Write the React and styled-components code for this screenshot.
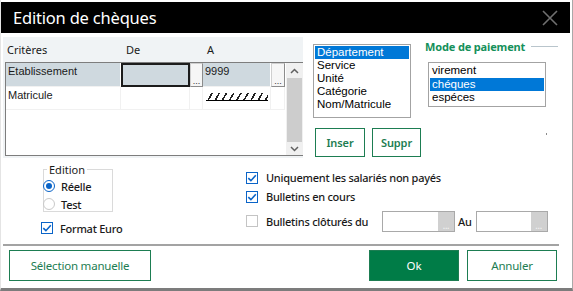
import styled, { createGlobalStyle } from "styled-components"

const GlobalStyle = createGlobalStyle`
  html, body {
    margin: 0;
    padding: 0;
    background: #fff;
  }
  body {
    width: 573px;
    height: 291px;
    overflow: hidden;
  }
`

const UI_FONT = `"Noto Sans", "Open Sans", sans-serif`
const LIST_FONT = `"Liberation Sans", Arial, sans-serif`
const GREEN = "#1d7d52"

const Window = styled.div`
  width: 573px;
  height: 291px;
  box-sizing: border-box;
  padding: 2px 2px 0 0;
  border-left: 1px solid #e4e4e4;
  border-right: 1px solid #a9a9a9;
  border-bottom: 3px solid #7c7c7c;
  display: flex;
  flex-direction: column;
  font-family: ${UI_FONT};
  color: #1a1a1a;
`

const TitleBar = styled.div`
  height: 31px;
  background: #000;
  display: flex;
  align-items: center;
  justify-content: space-between;
  padding: 0 12px 0 12px;
`

const Title = styled.span`
  color: #fff;
  font-size: 16.5px;
  letter-spacing: -0.2px;
`

// --- zone haute : grille des critères
const TopSection = styled.div`
  display: flex;
  height: 121px;
  margin: 4px 0 0 2px;
`

const GridPanel = styled.div`
  width: 300px;
  background: #f0f3f5;
  padding: 0 0 2px 2px;
  box-sizing: border-box;
  display: flex;
  flex-direction: column;
`

const COLS = "115px 69px 13px 68px 14px"

const GridHeader = styled.div`
  height: 25px;
  display: grid;
  grid-template-columns: ${COLS};
  padding-left: 1px;
  align-items: center;
  font-size: 11px;
`

const HeaderCell = styled.span`
  padding-left: ${p => p.$pad}px;
`

const GridBox = styled.div`
  flex: 1;
  display: flex;
  border: 1px solid #7d7d7d;
  border-right: none;
  background: #fff;
`

const Table = styled.div`
  flex: 1;
  display: grid;
  grid-template-columns: ${COLS};
  grid-template-rows: 24px 23px;
  align-content: start;
  font-family: ${LIST_FONT};
  font-size: 11px;
`

const Cell = styled.div`
  box-sizing: border-box;
  background: ${p => (p.$selected ? "#cfd9df" : "#fff")};
  border-right: 1px solid ${p => (p.$selected ? "#fff" : "#f1f1f1")};
  border-bottom: 1px solid #f1f1f1;
  padding: 2px 0 0 2px;
  white-space: nowrap;
  ${p => p.$focus && `
    border: 2px solid #1c1c1c;
    border-right: 2px solid #1c1c1c;
  `}
`

const DotsButton = styled.div`
  box-sizing: border-box;
  background: #f6f6f6;
  border: 1px solid #cfcfcf;
  border-right-color: #8c8c8c;
  border-bottom-color: #8c8c8c;
  font-size: 9px;
  display: flex;
  align-items: flex-end;
  justify-content: center;
  line-height: 10px;
  color: #333;
`

const Hatch = styled.div`
  margin: 4px 2px 0 1px;
  height: 7px;
  border-bottom: 1px solid #000;
  background: repeating-linear-gradient(120deg, #fff 0 4.6px, #222 4.6px 6.2px);
`

const ScrollBar = styled.div`
  width: 17px;
  background: #f0f0f0;
  display: flex;
  flex-direction: column;
  align-items: center;
`

const ScrollArrow = styled.div`
  height: ${p => p.$h}px;
  width: 100%;
  display: flex;
  align-items: center;
  justify-content: center;
`

const ScrollThumb = styled.div`
  flex: 1;
  width: 15px;
  background: #cdcdcd;
`

// --- listes de droite
const CriteriaColumn = styled.div`
  width: 108px;
  margin-left: 10px;
  padding-top: 7px;
  display: flex;
  flex-direction: column;
`

const ListBox = styled.div`
  width: ${p => p.$w}px;
  height: ${p => p.$h}px;
  box-sizing: border-box;
  border: 1px solid #a3a3a3;
  padding: 1px 0 0 1px;
  font-family: ${LIST_FONT};
  font-size: 11.5px;
  line-height: ${p => p.$lh}px;
  background: #fff;
`

const ListItem = styled.div`
  padding-left: 2px;
  margin-right: 1px;
  white-space: nowrap;
  background: ${p => (p.$selected ? "#0078d7" : "transparent")};
  color: ${p => (p.$selected ? "#fff" : "#000")};
`

const ButtonRow = styled.div`
  display: flex;
  gap: 7px;
  margin-top: 10px;
  margin-left: 2px;
`

const GreenButton = styled.button`
  width: ${p => p.$w}px;
  height: ${p => p.$h}px;
  box-sizing: border-box;
  border: 1.5px solid ${GREEN};
  background: ${p => (p.$primary ? "#007c47" : "#fff")};
  color: ${p => (p.$primary ? "#fff" : GREEN)};
  font-family: ${UI_FONT};
  font-size: ${p => p.$size || 11}px;
  font-weight: ${p => p.$weight || 600};
  letter-spacing: ${p => p.$ls ?? -0.1}px;
  padding: 0;
  cursor: pointer;
`

const PaymentColumn = styled.div`
  margin-left: 4px;
  padding-top: 3px;
  display: flex;
  flex-direction: column;
`

const SectionHeader = styled.div`
  display: flex;
  align-items: center;
  height: 13px;
`

const SectionTitle = styled.span`
  color: #15905a;
  font-size: 11px;
  font-weight: 700;
  letter-spacing: -0.15px;
`

const SectionLine = styled.span`
  width: 27px;
  height: 1px;
  background: #b9c5cc;
  margin-left: 6px;
`

const PaymentList = styled.div`
  margin: 9px 0 0 3px;
`

const Tick = styled.span`
  width: 1px;
  height: 2px;
  background: #8a8a8a;
  margin: 26px 0 0 121px;
`

// --- zone du milieu : options
const MiddleSection = styled.div`
  display: flex;
  height: 86px;
  margin-left: 2px;
`

const OptionsLeft = styled.div`
  width: 243px;
  box-sizing: border-box;
  padding: 5px 0 0 40px;
`

const GroupBox = styled.fieldset`
  width: 70px;
  height: 49px;
  box-sizing: border-box;
  margin: 0;
  padding: 1px 0 0 0;
  border: 1px solid #dadada;
`

const Legend = styled.legend`
  font-size: 11px;
  padding: 0 2px;
  margin-left: 3px;
  line-height: 13px;
`

const OptionRow = styled.label`
  display: flex;
  align-items: center;
  height: ${p => p.$h || 18}px;
  margin-left: ${p => p.$ml || 0}px;
  margin-top: ${p => p.$mt || 0}px;
  font-size: 11px;
  font-weight: 500;
  letter-spacing: -0.25px;
  white-space: nowrap;
`

const RadioDot = styled.span`
  width: 12px;
  height: 12px;
  box-sizing: border-box;
  border-radius: 50%;
  border: 1px solid ${p => (p.$on ? "#0a64c8" : "#c9c9c9")};
  display: flex;
  align-items: center;
  justify-content: center;
  margin-right: 6px;
  background: #fff;

  &::after {
    content: '';
    width: 6px;
    height: 6px;
    border-radius: 50%;
    background: ${p => (p.$on ? "#0a64c8" : "transparent")};
  }
`

const CheckBox = styled.span`
  width: 12px;
  height: 12px;
  box-sizing: border-box;
  border: 1px solid ${p => (p.$on ? "#0a64c8" : "#c4c4c4")};
  background: #fff;
  display: flex;
  align-items: center;
  justify-content: center;
  margin-right: ${p => p.$mr || 7}px;
  flex-shrink: 0;
`

const OptionsRight = styled.div`
  padding-top: 10px;
  display: flex;
  flex-direction: column;
`

const OptionLabel = styled.span`
  width: ${p => (p.$w ? `${p.$w}px` : "auto")};
  flex-shrink: 0;
`

const DateInput = styled.div`
  width: ${p => p.$w}px;
  height: 21px;
  box-sizing: border-box;
  border: 1px solid #a9a9a9;
  display: flex;
  justify-content: flex-end;
  background: #fff;
  flex-shrink: 0;
`

const DateButton = styled.span`
  width: 16px;
  background: #d0d0d0;
  color: #f4f4f4;
  font-size: 9px;
  line-height: 10px;
  display: flex;
  align-items: flex-end;
  justify-content: center;
`

const AuLabel = styled.span`
  margin: 0 4px 0 3px;
`

const Separator = styled.div`
  width: 556px;
  height: 2px;
  margin-left: 2px;
  background: #a3a3a3;
`

const Footer = styled.div`
  display: flex;
  gap: 8px;
  width: 548px;
  margin: 4px 0 0 8px;
`

const Spacer = styled.div`
  flex: 1;
`

const Check = ({ on, mr }) => (
  <CheckBox $on={on} $mr={mr}>
    {on && (
      <svg width="10" height="10" viewBox="0 0 10 10">
        <path d="M1.3 5.2 L3.9 7.7 L8.8 2.2" fill="none" stroke="#0a64c8" strokeWidth="1.6" />
      </svg>
    )}
  </CheckBox>
)

const Chevron = ({ up }) => (
  <svg width="9" height="6" viewBox="0 0 9 6">
    <path d={up ? "M1 5 L4.5 1.5 L8 5" : "M1 1 L4.5 4.5 L8 1"} fill="none" stroke="#606060" strokeWidth="1.5" />
  </svg>
)

const App = () => {
  const criteres = ["Département", "Service", "Unité", "Catégorie", "Nom/Matricule"]
  const modes = ["virement", "chéques", "espéces"]

  return (
    <>
      <GlobalStyle />
      <Window>
        <TitleBar>
          <Title>Edition de chèques</Title>
          <svg width="16" height="16" viewBox="0 0 16 16">
            <path d="M1 1 L15 15 M15 1 L1 15" stroke="#6f6f6f" strokeWidth="1.6" />
          </svg>
        </TitleBar>

        <TopSection>
          <GridPanel>
            <GridHeader>
              <HeaderCell $pad={1}>Critères</HeaderCell>
              <HeaderCell $pad={5}>De</HeaderCell>
              <span />
              <HeaderCell $pad={4}>A</HeaderCell>
            </GridHeader>
            <GridBox>
              <Table>
                <Cell $selected>Etablissement</Cell>
                <Cell $selected $focus />
                <DotsButton>...</DotsButton>
                <Cell $selected>9999</Cell>
                <DotsButton>...</DotsButton>

                <Cell>Matricule</Cell>
                <Cell />
                <Cell />
                <Cell><Hatch /></Cell>
                <Cell />
              </Table>
              <ScrollBar>
                <ScrollArrow $h={15}><Chevron up /></ScrollArrow>
                <ScrollThumb />
                <ScrollArrow $h={13}><Chevron /></ScrollArrow>
              </ScrollBar>
            </GridBox>
          </GridPanel>

          <CriteriaColumn>
            <ListBox $w={98} $h={74} $lh={13}>
              {criteres.map((c, i) => (
                <ListItem key={c} $selected={i === 0}>{c}</ListItem>
              ))}
            </ListBox>
            <ButtonRow>
              <GreenButton $w={50} $h={29}>Inser</GreenButton>
              <GreenButton $w={49} $h={29}>Suppr</GreenButton>
            </ButtonRow>
          </CriteriaColumn>

          <PaymentColumn>
            <SectionHeader>
              <SectionTitle>Mode de paiement</SectionTitle>
              <SectionLine />
            </SectionHeader>
            <PaymentList>
              <ListBox $w={118} $h={45} $lh={13.5}>
                {modes.map((m, i) => (
                  <ListItem key={m} $selected={i === 1}>{m}</ListItem>
                ))}
              </ListBox>
            </PaymentList>
            <Tick />
          </PaymentColumn>
        </TopSection>

        <MiddleSection>
          <OptionsLeft>
            <GroupBox>
              <Legend>Edition</Legend>
              <OptionRow $ml={-1}><RadioDot $on />Réelle</OptionRow>
              <OptionRow $ml={-1}><RadioDot />Test</OptionRow>
            </GroupBox>
            <OptionRow $ml={-2} $mt={5} $h={22}><Check on />Format Euro</OptionRow>
          </OptionsLeft>

          <OptionsRight>
            <OptionRow $h={19}><Check on mr={8} />Uniquement les salariés non payés</OptionRow>
            <OptionRow $h={19}><Check on mr={8} />Bulletins en cours</OptionRow>
            <OptionRow $h={22} $mt={4}>
              <Check mr={8} />
              <OptionLabel $w={116}>Bulletins clôturés du</OptionLabel>
              <DateInput $w={73}><DateButton>...</DateButton></DateInput>
              <AuLabel>Au</AuLabel>
              <DateInput $w={72}><DateButton>...</DateButton></DateInput>
            </OptionRow>
          </OptionsRight>
        </MiddleSection>

        <Separator />

        <Footer>
          <GreenButton $w={142} $h={31} $size={11.5} $weight={400} $ls={-0.2}>Sélection manuelle</GreenButton>
          <Spacer />
          <GreenButton $w={90} $h={31} $size={11.5} $weight={400} $primary>Ok</GreenButton>
          <GreenButton $w={90} $h={31} $size={11.5} $weight={400} $ls={-0.2}>Annuler</GreenButton>
        </Footer>
      </Window>
    </>
  )
}

export default App
